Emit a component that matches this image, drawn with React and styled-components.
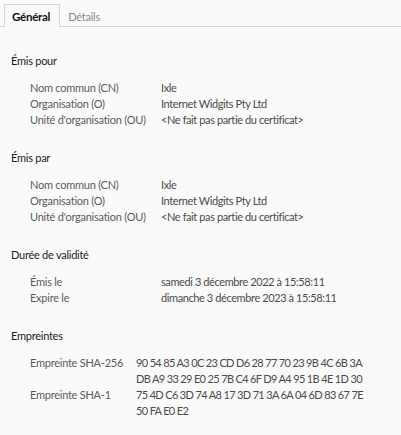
import styled, { createGlobalStyle } from 'styled-components'

const GlobalStyle = createGlobalStyle`
  body {
    margin: 0;
    background: #fafafa;
    font-family: "Lato", "Noto Sans", sans-serif;
    font-size: 11px;
    letter-spacing: -0.25px;
  }
`;

const sections = [
  {
    title: "Émis pour",
    rows: [
      ["Nom commun (CN)", ["Ixle"]],
      ["Organisation (O)", ["Internet Widgits Pty Ltd"]],
      ["Unité d'organisation (OU)", ["<Ne fait pas partie du certificat>"]],
    ],
  },
  {
    title: "Émis par",
    rows: [
      ["Nom commun (CN)", ["Ixle"]],
      ["Organisation (O)", ["Internet Widgits Pty Ltd"]],
      ["Unité d'organisation (OU)", ["<Ne fait pas partie du certificat>"]],
    ],
  },
  {
    title: "Durée de validité",
    rows: [
      ["Émis le", ["samedi 3 décembre 2022 à 15:58:11"]],
      ["Expire le", ["dimanche 3 décembre 2023 à 15:58:11"]],
    ],
  },
  {
    title: "Empreintes",
    hash: true,
    rows: [
      ["Empreinte SHA-256", [
        "90 54 85 A3 0C 23 CD D6 28 77 70 23 9B 4C 6B 3A",
        "DB A9 33 29 E0 25 7B C4 6F D9 A4 95 1B 4E 1D 30",
      ]],
      ["Empreinte SHA-1", [
        "75 4D C6 3D 74 A8 17 3D 71 3A 6A 04 6D 83 67 7E",
        "50 FA E0 E2",
      ]],
    ],
  },
];

function App() {
  return (
    <>
      <GlobalStyle />
      <Page>
        <TabBar>
          <Tab $active>Général</Tab>
          <Tab>Détails</Tab>
        </TabBar>
        <Content>
          {sections.map((s) => (
            <Section key={s.title}>
              <SectionTitle>{s.title}</SectionTitle>
              <Fields $hash={s.hash}>
                {s.rows.map(([label, lines]) => (
                  <Row key={label}>
                    <Label>{label}</Label>
                    <Value $hash={s.hash}>
                      {lines.map((l) => (
                        <div key={l}>{l}</div>
                      ))}
                    </Value>
                  </Row>
                ))}
              </Fields>
            </Section>
          ))}
        </Content>
      </Page>
    </>
  )
}

export default App

const Page = styled.div`
width: 401px;
height: 435px;
background: #fafafa;
overflow: hidden;
`;

const TabBar = styled.div`
display: flex;
padding: 4px 4px 0;
height: 22px;
border-bottom: 1px solid #d6d6d6;
`;

const Tab = styled.div`
display: flex;
align-items: center;
padding: 0 9px 0 7px;
height: 22px;
margin-bottom: -1px;
font-size: ${(p) => (p.$active ? '11.5px' : '11px')};
font-weight: ${(p) => (p.$active ? 700 : 400)};
color: ${(p) => (p.$active ? '#111' : '#8a8a8a')};
background: ${(p) => (p.$active ? '#fafafa' : 'transparent')};
border: 1px solid ${(p) => (p.$active ? '#d6d6d6' : 'transparent')};
border-bottom: none;
`;

const Content = styled.div`
padding: 26px 0 0 11px;
`;

const Section = styled.section`
margin-bottom: 22px;
`;

const SectionTitle = styled.div`
color: #1a1a1a;
line-height: 16px;
margin-bottom: 11px;
`;

const Fields = styled.div`
display: grid;
grid-template-columns: ${(p) => (p.$hash ? '106px' : '131px')} 1fr;
padding-left: 19px;
`;

const Row = styled.div`
display: contents;
`;

const Label = styled.div`
color: #5a5a5a;
line-height: 16px;
white-space: nowrap;
`;

const Value = styled.div`
color: #4a4a4a;
line-height: 16px;
white-space: nowrap;
letter-spacing: ${(p) => (p.$hash ? '-0.65px' : '-0.4px')};
`;
